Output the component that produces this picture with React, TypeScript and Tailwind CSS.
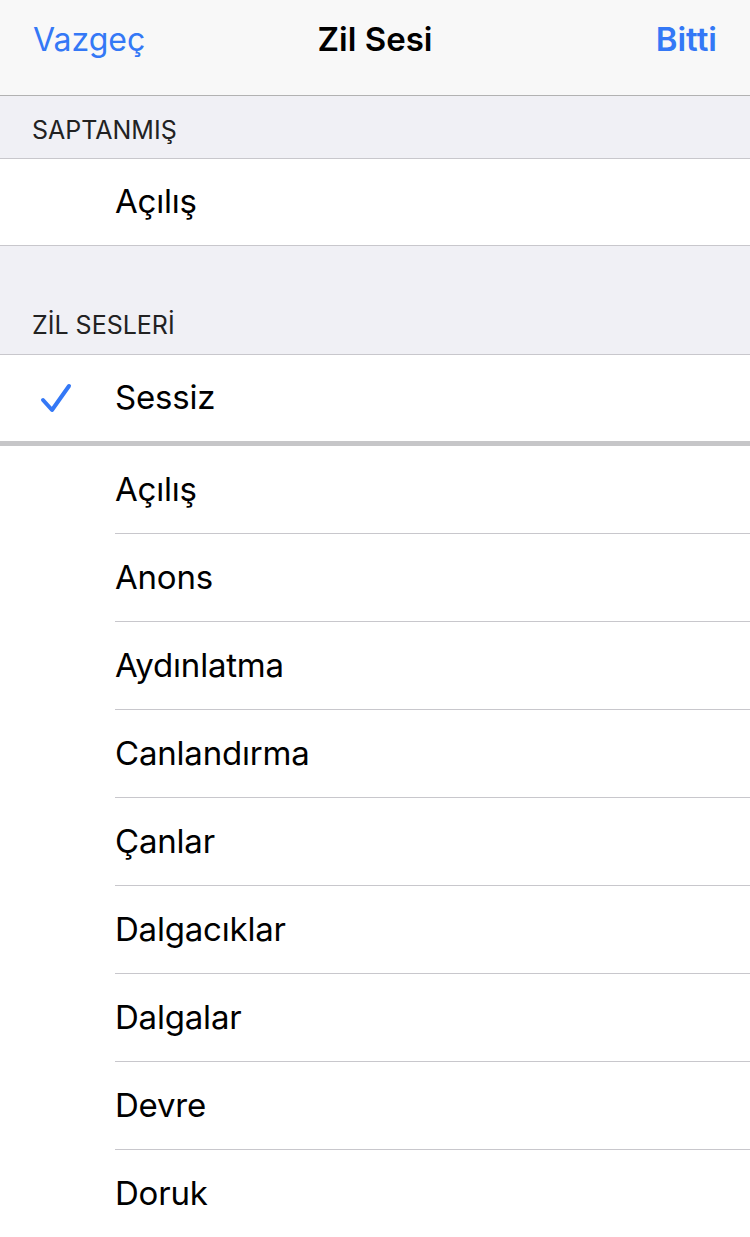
const FONT = { fontFamily: 'Inter, "Noto Sans", sans-serif' }

const TONES = [
  'Açılış',
  'Anons',
  'Aydınlatma',
  'Canlandırma',
  'Çanlar',
  'Dalgacıklar',
  'Dalgalar',
  'Devre',
  'Doruk',
]

function CheckMark() {
  return (
    <svg width="32" height="30" viewBox="0 0 32 30" fill="none">
      <path
        d="M3 17 L12 27 L29 3"
        stroke="#3478F6"
        strokeWidth="4"
        strokeLinecap="round"
        strokeLinejoin="round"
      />
    </svg>
  )
}

function Row({ label, last }: { label: string; last?: boolean }) {
  return (
    <div className="flex h-[88px] bg-white">
      <div className="w-[115px] shrink-0" />
      <div
        className={`flex flex-1 items-center text-[33px] text-black tracking-[-0.2px] ${
          last ? '' : 'border-b border-[#c8c7cc]'
        }`}
      >
        {label}
      </div>
    </div>
  )
}

export default function App() {
  return (
    <div className="min-h-[1237px] w-[750px] overflow-hidden bg-white" style={FONT}>
      {/* nav bar */}
      <div className="grid h-[96px] grid-cols-[1fr_auto_1fr] items-center border-b border-[#b2b2b2] bg-[#f8f8f8] px-[33px] pb-[16px]">
        <span className="text-[32px] text-[#3478F6]">Vazgeç</span>
        <span className="text-[33px] font-semibold text-black">Zil Sesi</span>
        <span className="text-right text-[33px] font-semibold text-[#3478F6]">Bitti</span>
      </div>

      {/* SAPTANMIŞ */}
      <div className="flex h-[63px] items-center border-b border-[#c8c7cc] bg-[#f0f0f5] pl-[32px] pt-[8px] text-[25px] text-[#222]">
        SAPTANMIŞ
      </div>
      <div className="flex h-[87px] items-center border-b border-[#c8c7cc] bg-white pl-[115px] text-[33px] text-black tracking-[-0.2px]">
        Açılış
      </div>

      {/* ZİL SESLERİ */}
      <div className="flex h-[109px] items-end border-b border-[#c8c7cc] bg-[#f0f0f5] pb-[10px] pl-[32px] text-[25px] text-[#222]">
        ZİL SESLERİ
      </div>
      <div className="flex h-[86px] bg-white">
        <div className="flex w-[115px] shrink-0 items-center pl-[40px]">
          <CheckMark />
        </div>
        <div className="flex flex-1 items-center text-[33px] text-black tracking-[-0.2px]">Sessiz</div>
      </div>
      <div className="h-[5px] bg-[#c6c6c8]" />

      {TONES.map((t, i) => (
        <Row key={t} label={t} last={i === TONES.length - 1} />
      ))}
    </div>
  )
}
